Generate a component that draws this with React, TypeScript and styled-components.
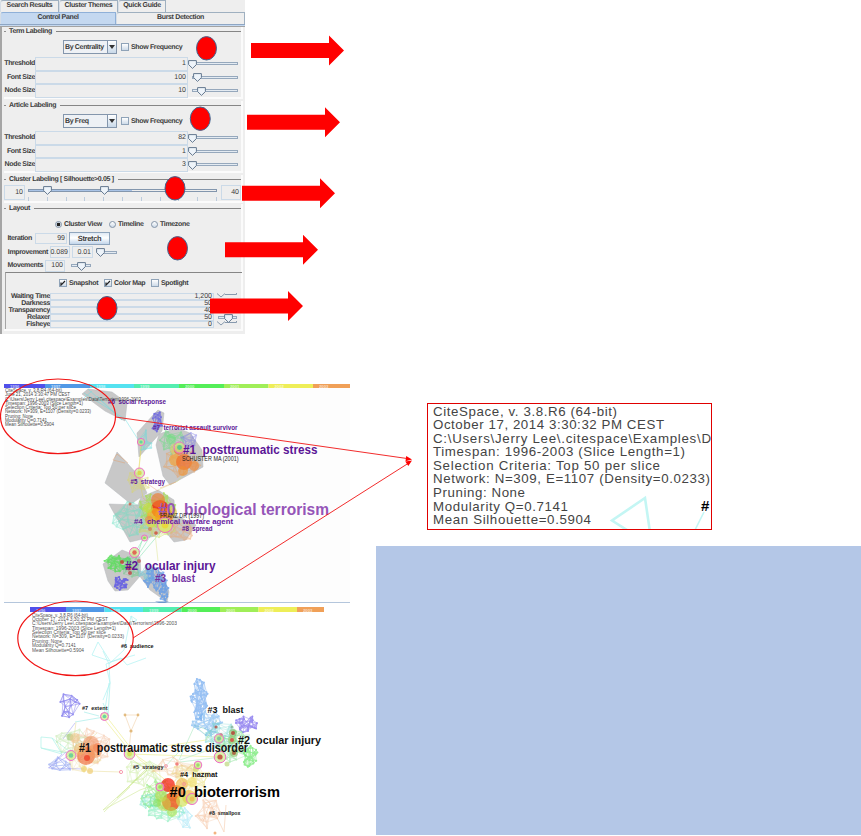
import React, { FC, ReactNode } from 'react'
import { createGlobalStyle, styled } from 'styled-components'

const GlobalStyle = createGlobalStyle`
  body {
    margin: 0;
    background: #fff;
  }

  * {
    box-sizing: border-box;
  }
`;

const Page = styled.div`
  position: relative;
  width: 861px;
  height: 836px;
  overflow: hidden;
  font-family: "Liberation Sans", Arial, sans-serif;
`;

/* ---------- control panel ---------- */

const Panel = styled.div`
  width: 245px;
  height: 334px;
  background: #eee;
  color: #3c3c3c;
  font-size: 7px;
  font-weight: 700;
  letter-spacing: -0.34px;
  line-height: 8px;
  white-space: nowrap;
  text-rendering: geometricPrecision;
`;

const TabRow = styled.div`
  display: flex;
  height: 12px;
`;

const Tab = styled.div<{ $width: number; $active?: boolean }>`
  width: ${({ $width }) => $width}px;
  padding-top: 1px;
  text-align: center;
  border: 1px solid ${({ $active }) => ($active ? '#8fb0d8' : '#9fb0c0')};
  border-bottom: none;
  border-left-color: #d5dde6;
  border-top-left-radius: 3px;
  background: ${({ $active }) => ($active ? '#c4d8f0' : '#eee')};
`;

const TabEdge = styled.div`
  height: 3px;
  border-top: 1px solid #8ea6c4;
  border-bottom: 1px solid #a3a3a3;
  background: #c4d8f0;
`;

const PanelBody = styled.div`
  height: 307px;
  border-left: 2px solid #a5a5a5;
  padding-left: 2px;
`;

const Section = styled.div<{ $height: number; $gap?: number }>`
  height: ${({ $height }) => $height}px;
  margin-bottom: ${({ $gap }) => $gap ?? 2}px;
  width: 239px;
  border-right: 2px solid #fbfbfb;
  border-bottom: 2px solid #fbfbfb;
`;

const SectionTitle = styled.div`
  display: flex;
  align-items: center;
  height: 8px;

  &::before {
    content: '';
    width: 2px;
    height: 1px;
    margin-right: 3px;
    background: #909090;
  }

  &::after {
    content: '';
    flex: 1;
    height: 1px;
    margin-left: 4px;
    background: #858585;
  }

  span {
    padding-top: 2px;
  }
`;

const ComboRow = styled.div`
  display: flex;
  align-items: center;
  height: 14px;
  margin: 5px 0 3px 59px;
`;

const Combo = styled.div`
  display: flex;
  width: 54px;
  height: 14px;
  margin-right: 4px;
  border: 1px solid #8496ac;
  background: #eef1f5;
`;

const ComboText = styled.span`
  width: 43px;
  padding: 3px 0 0 1px;
`;

const ComboArrow = styled.span`
  display: flex;
  flex: 1;
  align-items: center;
  justify-content: center;
  border-left: 1px solid #8496ac;
  background: linear-gradient(#fff, #c8d8e8);

  &::after {
    content: '';
    border: 3px solid transparent;
    border-top: 4px solid #333;
    border-bottom: none;
  }
`;

const CheckBox = styled.span`
  display: flex;
  width: 8px;
  height: 8px;
  border: 1px solid #8fa3b8;
  background: linear-gradient(#fff, #cddae8);
`;

const CheckItem = styled.div<{ $width?: number }>`
  display: flex;
  align-items: center;
  gap: 2px;
  width: ${({ $width }) => ($width ? `${$width}px` : 'auto')};
`;

const CheckText = styled.span`
  padding-top: 2px;
`;

const Row = styled.div<{ $height: number }>`
  display: flex;
  align-items: center;
  height: ${({ $height }) => $height}px;
`;

const RowLabel = styled.span<{ $width: number }>`
  width: ${({ $width }) => $width}px;
  display: flex;
  justify-content: flex-end;
  padding-top: 1px;
`;

const Field = styled.span<{ $width: number; $height?: number; $left?: number }>`
  width: ${({ $width }) => $width}px;
  height: ${({ $height }) => ($height ? `${$height}px` : '100%')};
  margin-left: ${({ $left }) => $left ?? 0}px;
  display: flex;
  align-items: center;
  justify-content: flex-end;
  padding: 1px 1px 0 0;
  border: 1px solid #cbdae8;
  font-weight: 400;
  letter-spacing: 0;
`;

const SliderBox = styled.span<{ $width: number; $left: number }>`
  position: relative;
  display: flex;
  align-items: center;
  width: ${({ $width }) => $width}px;
  height: 8px;
  margin-left: ${({ $left }) => $left}px;
`;

const Track = styled.span`
  width: 100%;
  height: 3px;
  border: 1px solid #96a8bc;
  background: #e4ebf2;
`;

const ThumbIcon = styled.svg`
  position: absolute;
  top: 0;
  width: 9px;
  height: 9px;
`;

const SliderRow = styled.div`
  display: flex;
  margin-top: 2px;
  height: 15px;
`;

const WideSlider = styled.div`
  position: relative;
  width: 190px;
  margin: 4px 4px 0 3px;
`;

const WideTrack = styled.div`
  height: 3px;
  border: 1px solid #8396ad;
  background: linear-gradient(90deg, #a9c3e6 55%, #eee 55%);
`;

const WideThumbs = styled.div`
  position: absolute;
  top: -3px;
  left: 0;
`;

const Ticks = styled.div`
  display: flex;
  justify-content: space-between;
  margin-top: 5px;

  span {
    width: 1px;
    height: 4px;
    background: #bccbdc;
  }
`;

const RadioRow = styled.div`
  display: flex;
  align-items: center;
  height: 9px;
  margin: 8px 0 2px 51px;
`;

const RadioItem = styled.div<{ $width: number }>`
  display: flex;
  align-items: center;
  gap: 2px;
  width: ${({ $width }) => $width}px;
`;

const RadioDot = styled.span<{ $on?: boolean }>`
  width: 7px;
  height: 7px;
  border: 1px solid #8394a8;
  border-radius: 50%;
  background: ${({ $on }) => ($on ? 'radial-gradient(#222 40%, #dde6ef 60%)' : 'linear-gradient(#fff, #cddae8)')};
`;

const StretchButton = styled.span`
  width: 41px;
  height: 13px;
  margin-left: 2px;
  padding-top: 2px;
  border: 1px solid #8fa5bd;
  background: linear-gradient(#dfe9f4, #fff 45%, #c2d5ea);
  text-align: center;
  font-size: 7.5px;
`;

const InnerBox = styled.div`
  width: 237px;
  height: 57px;
  margin-left: 1px;
  border-top: 1px solid #858585;
  border-left: 1px solid #a5a5a5;
`;

const CheckRow = styled.div`
  display: flex;
  height: 20px;
  padding: 0 0 0 53px;
  align-items: center;
`;

const CutSlider = styled.svg`
  width: 20px;
  height: 7px;
  margin-left: 3px;
`;

/* ---------- maps and callout ---------- */

const Lower = styled.div`
  display: flex;
  height: 502px;
`;

const MapColumn = styled.div`
  width: 376px;
  padding-top: 50px;
`;

const TopMap = styled.svg`
  display: block;
  width: 346px;
  height: 219px;
  margin-left: 4px;
  background: #fdfdfd;
`;

const BottomMap = styled.svg`
  display: block;
  width: 376px;
  height: 233px;
`;

const SideColumn = styled.div`
  flex: 1;
  padding-top: 69px;
`;

const Callout = styled.div`
  width: 285px;
  height: 127px;
  margin: 0 0 16px 51px;
  border: 1px solid #e00000;
  overflow: hidden;

  svg {
    display: block;
  }
`;

const BlueBlock = styled.div`
  height: 289px;
  background: #b4c7e7;
`;

const Annotations = styled.svg`
  position: absolute;
  top: 0;
  left: 0;
  pointer-events: none;
`;

const Thumb: FC<{ at: number }> = ({ at }) => (
  <ThumbIcon viewBox="0 0 9 9" style={{ left: at }}>
    <path d="M.6.6h7.8v4L4.5 8.4.6 4.6z" fill="#eef4fa" stroke="#64788f" strokeWidth="1" />
  </ThumbIcon>
)

const Slider: FC<{ width: number; left: number; at: number }> = ({ width, left, at }) => (
  <SliderBox $width={width} $left={left}>
    <Track />
    <Thumb at={at} />
  </SliderBox>
)

const Check: FC<{ checked?: boolean; width?: number; children: ReactNode }> = ({ checked, width, children }) => (
  <CheckItem $width={width}>
    <CheckBox>
      {checked && (
        <svg width="6" height="6" viewBox="0 0 6 6">
          <path d="M1 2.5v2.6L5 1" fill="none" stroke="#222" strokeWidth="1.2" />
        </svg>
      )}
    </CheckBox>
    <CheckText>{children}</CheckText>
  </CheckItem>
)

interface LabelingProps {
  title: string;
  mode: string;
  rows: [string, string, number][];
}

const LabelingSection: FC<LabelingProps> = ({ title, mode, rows }) => (
  <Section $height={72}>
    <SectionTitle><span>{title}</span></SectionTitle>
    <ComboRow>
      <Combo>
        <ComboText>{mode}</ComboText>
        <ComboArrow />
      </Combo>
      <Check>Show Frequency</Check>
    </ComboRow>
    {rows.map(([label, value, at]) => (
      <Row key={label} $height={13.5}>
        <RowLabel $width={31}>{label}</RowLabel>
        <Field $width={153}>{value}</Field>
        <Slider width={46} left={4} at={at} />
      </Row>
    ))}
  </Section>
)

type SliderKind = 'cut' | 'full' | 'none';

const displayRows: [string, string, SliderKind][] = [
  ['Waiting Time', '1,200', 'cut'],
  ['Darkness', '50', 'none'],
  ['Transparency', '40', 'none'],
  ['Relaxer', '50', 'full'],
  ['Fisheye', '0', 'cut'],
];

const ControlPanel: FC = () => (
  <Panel>
    <TabRow>
      <Tab $width={59}>Search Results</Tab>
      <Tab $width={59}>Cluster Themes</Tab>
      <Tab $width={48}>Quick Guide</Tab>
    </TabRow>
    <TabRow>
      <Tab $width={116} $active>Control Panel</Tab>
      <Tab $width={129}>Burst Detection</Tab>
    </TabRow>
    <TabEdge />
    <PanelBody>
      <LabelingSection
        title="Term Labeling"
        mode="By Centrality"
        rows={[['Threshold', '1', -4], ['Font Size', '100', 1], ['Node Size', '10', 5]]}
      />
      <LabelingSection
        title="Article Labeling"
        mode="By Freq"
        rows={[['Threshold', '82', -4], ['Font Size', '1', -4], ['Node Size', '3', -4]]}
      />
      <Section $height={28} $gap={1}>
        <SectionTitle><span>Cluster Labeling [ Silhouette&gt;0.05 ]</span></SectionTitle>
        <SliderRow>
          <Field $width={21}>10</Field>
          <WideSlider>
            <WideTrack />
            <WideThumbs>
              <Thumb at={15} />
              <Thumb at={72} />
            </WideThumbs>
            <Ticks>
              {Array.from({ length: 11 }, (_, i) => <span key={i} />)}
            </Ticks>
          </WideSlider>
          <Field $width={20}>40</Field>
        </SliderRow>
      </Section>
      <Section $height={127} $gap={0}>
        <SectionTitle><span>Layout</span></SectionTitle>
        <RadioRow>
          <RadioItem $width={54}><RadioDot $on />Cluster View</RadioItem>
          <RadioItem $width={42}><RadioDot />Timeline</RadioItem>
          <RadioItem $width={42}><RadioDot />Timezone</RadioItem>
        </RadioRow>
        <Row $height={14}>
          <RowLabel $width={28}>Iteration</RowLabel>
          <Field $width={32} $height={11} $left={3}>99</Field>
          <StretchButton>Stretch</StretchButton>
        </Row>
        <Row $height={14}>
          <RowLabel $width={44}>Improvement</RowLabel>
          <Field $width={20} $height={12} $left={2}>0.089</Field>
          <Field $width={21} $height={12} $left={2}>0.01</Field>
          <Slider width={20} left={4} at={-1} />
        </Row>
        <Row $height={13}>
          <RowLabel $width={39}>Movements</RowLabel>
          <Field $width={20} $height={12} $left={2}>100</Field>
          <Slider width={20} left={6} at={6} />
        </Row>
        <InnerBox>
          <CheckRow>
            <Check checked width={45}>Snapshot</Check>
            <Check checked width={47}>Color Map</Check>
            <Check>Spotlight</Check>
          </CheckRow>
          {displayRows.map(([label, value, kind]) => (
            <Row key={label} $height={7}>
              <RowLabel $width={44}>{label}</RowLabel>
              <Field $width={164}>{value}</Field>
              {kind === 'full' && <Slider width={19} left={4} at={6} />}
              {kind === 'cut' && (
                <CutSlider viewBox="0 0 20 7">
                  <path d="M0 .5l4 3.5l4-3.5M8 1.5h11.5V0" fill="none" stroke="#8799ad" />
                </CutSlider>
              )}
            </Row>
          ))}
        </InnerBox>
      </Section>
    </PanelBody>
  </Panel>
)

/* Text fitted to the width between x and end */
interface FitProps {
  x: number;
  end: number;
  y: number;
  size: number;
  fill?: string;
  bold?: boolean;
  adjust?: 'spacing' | 'spacingAndGlyphs';
  children: string;
}

const Fit: FC<FitProps> = ({ x, end, y, size, fill = '#333', bold, adjust = 'spacingAndGlyphs', children }) => (
  <text
    x={x}
    y={y}
    textLength={end - x}
    lengthAdjust={adjust}
    fontSize={size}
    fontWeight={bold ? 700 : 400}
    fill={fill}
    style={{ whiteSpace: 'pre' }}
  >
    {children}
  </text>
)

const yearColors = ['#5050ea', '#5098e6', '#54e2f0', '#54eeb0', '#54ee58', '#a0ee58', '#eeee58', '#f0a058'];

interface YearBarProps {
  edges: number[];
  y: number;
  height: number;
}

const YearBar: FC<YearBarProps> = ({ edges, y, height }) => (
  <g>
    {yearColors.map((color, i) => (
      <g key={color}>
        <rect x={edges[i]} y={y} width={edges[i + 1] - edges[i]} height={height} fill={color} />
        <text x={edges[i] + 6} y={y + height - 0.3} fontSize="4.2" fontWeight="700" fill="#fff" opacity=".65">
          {1996 + i}
        </text>
      </g>
    ))}
  </g>
)

const makeRandom = (seed: number) => {
  let state = seed * 7919 + 17;
  return () => {
    state = (state * 16807) % 2147483647;
    return state / 2147483647;
  }
}

interface WebProps {
  cx: number;
  cy: number;
  rx: number;
  ry: number;
  count: number;
  color: string;
  links?: number;
  opacity?: number;
}

const Web: FC<WebProps> = ({ cx, cy, rx, ry, count, color, links = 4, opacity = 0.5 }) => {
  const random = makeRandom(Math.round(cx * 3 + cy * 5 + count));
  // sunflower layout with some jitter keeps the nodes spread over the ellipse
  const nodes = Array.from({ length: count }, (_, i) => {
    const angle = i * 2.4 + random() * 0.9;
    const reach = Math.sqrt((i + 0.3 + random() * 0.9) / count);
    return [cx + Math.cos(angle) * reach * rx, cy + Math.sin(angle) * reach * ry];
  });
  const segments: string[] = [];
  nodes.forEach(([x, y], i) => {
    const near = nodes
      .map((n, j) => ({ j, d: Math.hypot(n[0] - x, n[1] - y) }))
      .filter(({ j }) => j !== i)
      .sort((a, b) => a.d - b.d)
      .slice(0, links);
    const far = Math.floor(random() * count);
    [...near.map(({ j }) => j), far].forEach((j) => {
      segments.push(`M${x.toFixed(1)} ${y.toFixed(1)}L${nodes[j][0].toFixed(1)} ${nodes[j][1].toFixed(1)}`);
    });
  });
  return (
    <g opacity={opacity}>
      <path d={segments.join('')} stroke={color} strokeWidth=".55" fill="none" />
      {nodes.map(([x, y], i) => <circle key={i} cx={x} cy={y} r=".95" fill={color} />)}
    </g>
  )
}

/* [cx, cy, r, fill, opacity] */
type Blob = [number, number, number, string, number];

const Blobs: FC<{ items: Blob[] }> = ({ items }) => (
  <g>
    {items.map(([cx, cy, r, fill, opacity], i) => (
      <circle key={i} cx={cx} cy={cy} r={r} fill={fill} opacity={opacity} />
    ))}
  </g>
)

/* Pivot nodes: pink ring, yellow-green body, small core */
const Pivots: FC<{ items: [number, number, number, string][] }> = ({ items }) => (
  <g>
    {items.map(([cx, cy, r, core], i) => (
      <g key={i}>
        <circle cx={cx} cy={cy} r={r} fill="#cfe88a" fillOpacity=".7" stroke="#f06cc8" strokeWidth="1" />
        <circle cx={cx} cy={cy} r={r * 0.45} fill={core} opacity=".8" />
      </g>
    ))}
  </g>
)

const purple = '#5b1596';

const hulls = [
  '82,394 88,389 112,392 127,403 125,421 105,411',
  '137,433 154,414 158,410 164,413 162,431 139,457',
  '159,434 177,428 190,433 202,450 203,467 170,485 163,476 156,445',
  '117,452 139,476 147,493 131,504 105,483',
  '109,504 138,505 141,497 158,490 174,500 175,515 196,525 186,540 174,542 164,530 155,536 130,542',
  '103,564 122,550 140,557 141,575 128,590 115,591 108,581',
  '139,575 150,566 162,573 169,592 167,602 150,590',
];

const TopNetwork: FC = () => (
  <TopMap viewBox="4 384 346 219">
    <YearBar edges={[4, 45, 90, 134, 179, 224, 268.5, 313, 350]} y={384} height={4} />
    <g fill="#c8c8c8" stroke="#b5b8bd" strokeWidth=".5">
      {hulls.map((points) => <polygon key={points} points={points} />)}
    </g>
    <g fill="none" strokeWidth=".6" opacity=".7">
      <path d="M84 393L125 419L139 441M88 389L122 420L97 396M84 398L92 391" stroke="#5ce0e4" />
      <path d="M141 442L139 472L134 484M139 476L143 498M142 443L138 474" stroke="#e4d84c" />
      <path d="M145 536L136 551M151 535L135 560M164 528L137 560M143 538L138 553" stroke="#5fdc9a" />
      <path d="M153 514L158 561M202 452L178 481L158 490" stroke="#d8e07a" />
      <path d="M117 454L113 460L125 463M117 454L128 463" stroke="#e89a60" />
      <path d="M139 478L158 491M176 482L160 488M143 498L160 512" stroke="#f09a70" />
    </g>
    <Web cx={157} cy={422} rx={6} ry={11} count={16} color="#5b55e6" opacity={0.75} />
    <Web cx={145} cy={441} rx={8} ry={12} count={9} color="#5cdcdc" />
    <Web cx={173} cy={442} rx={14} ry={13} count={26} color="#5ee07a" />
    <Web cx={189} cy={440} rx={9} ry={9} count={12} color="#7a7ae6" />
    <Web cx={182} cy={462} rx={19} ry={16} count={28} color="#e8a060" />
    <Web cx={138} cy={482} rx={12} ry={13} count={14} color="#dcd660" />
    <Web cx={132} cy={519} rx={20} ry={18} count={36} color="#62e0c0" />
    <Web cx={157} cy={509} rx={19} ry={18} count={54} color="#a4e04c" opacity={0.7} />
    <Web cx={157} cy={526} rx={20} ry={12} count={28} color="#c8dc50" />
    <Web cx={181} cy={531} rx={14} ry={11} count={18} color="#f0a468" />
    <Web cx={118} cy={563} rx={14} ry={9} count={44} color="#50e050" opacity={0.8} />
    <Web cx={131} cy={567} rx={10} ry={12} count={18} color="#60cc80" />
    <Web cx={121} cy={583} rx={8} ry={7} count={26} color="#5b55e6" opacity={0.85} />
    <Web cx={147} cy={573} rx={9} ry={9} count={18} color="#62c8d8" />
    <Web cx={155} cy={579} rx={12} ry={12} count={40} color="#5b98ea" opacity={0.75} />
    <Web cx={164} cy={592} rx={5} ry={10} count={20} color="#5b98ea" opacity={0.8} />
    <Blobs
      items={[
        [171, 439, 5, '#6be07a', 0.5], [176, 449, 6, '#e8d060', 0.5],
        [175, 460, 6, '#f5a030', 0.65], [184, 462, 8, '#f0702c', 0.75],
        [194, 466, 5, '#f08838', 0.65], [183, 471, 5, '#f09030', 0.6], [179, 450, 5, '#ee5b30', 0.6],
        [160, 509, 9, '#f22a10', 0.85], [164, 516, 9, '#f07820', 0.75], [154, 515, 7, '#f4b020', 0.7],
        [148, 508, 5, '#c4de3c', 0.65], [158, 500, 7, '#ec7a30', 0.65], [151, 523, 5, '#d8e040', 0.6],
        [165, 526, 7, '#f4dc30', 0.85], [149, 520, 4, '#ee8050', 0.6], [172, 512, 5, '#e8cc40', 0.6],
        [122, 562, 2, '#d02c30', 0.75], [129, 568, 2.5, '#c83048', 0.75], [130, 573, 2, '#b83838', 0.75],
        [139, 561, 2, '#b83838', 0.6], [130, 504, 1.5, '#d05030', 0.7], [156, 533, 1.8, '#d04030', 0.75],
        [150, 529, 2, '#d86840', 0.6],
      ]}
    />
    <Pivots
      items={[
        [141, 442, 3.6, '#4cd2a0'], [139.5, 473, 5, '#d8d040'], [179.5, 447.5, 5.5, '#40cc90'],
        [134.5, 552.5, 5, '#e04a40'], [144.5, 538, 3, '#7cd850'], [165, 525, 7.5, '#ecd430'],
      ]}
    />
    <Fit x={108} end={166} y={404} size={7} fill={purple} bold>#6  social response</Fit>
    <Fit x={153} end={237.5} y={429.5} size={7} fill={purple} bold>#7  terrorist assault survivor</Fit>
    <Fit x={183} end={317.5} y={454.3} size={12.3} fill={purple} bold>#1  posttraumatic stress</Fit>
    <Fit x={182} end={238.5} y={461} size={6.3} fill="#222">SCHUSTER MA (2001)</Fit>
    <Fit x={130.5} end={165} y={484.3} size={6.5} fill={purple} bold>#5  strategy</Fit>
    <Fit x={158} end={329} y={515} size={16.5} fill="#9555b8" bold>#0  biological terrorism</Fit>
    <Fit x={160} end={204} y={518} size={6.3} fill="#222">FRANZ DR (1997)</Fit>
    <Fit x={134} end={233} y={524} size={8} fill="#66209e" bold>#4  chemical warfare agent</Fit>
    <Fit x={182} end={212.5} y={531.3} size={6.3} fill={purple} bold>#8  spread</Fit>
    <Fit x={125} end={215.5} y={569.5} size={12.5} fill={purple} bold>#2  ocular injury</Fit>
    <Fit x={155} end={195} y={581.5} size={10.5} fill="#7334a4" bold>#3  blast</Fit>
    <g opacity=".9">
      <Fit x={5} end={62} y={392} size={5.6}>CiteSpace, v. 3.8.R4 (64-bit)</Fit>
      <Fit x={5} end={70} y={396.3} size={5.6}>June 21, 2014 3:30:47 PM CEST</Fit>
      <Fit x={5} end={141} y={400.6} size={5.6}>{'C:\\Users\\Jerry Lee\\.citespace\\Examples\\Data\\Terrorism1996-2003'}</Fit>
      <Fit x={5} end={83} y={404.9} size={5.6}>Timespan: 1996-2003 (Slice Length=1)</Fit>
      <Fit x={5} end={76} y={409.2} size={5.6}>Selection Criteria: Top 50 per slice</Fit>
      <Fit x={5} end={91} y={413.4} size={5.6}>Network: N=309, E=1107 (Density=0.0233)</Fit>
      <Fit x={5} end={33} y={417.6} size={5.6}>Pruning: None</Fit>
      <Fit x={5} end={47} y={421.9} size={5.6}>Modularity Q=0.7141</Fit>
      <Fit x={5} end={54} y={426.1} size={5.6}>Mean Silhouette=0.5904</Fit>
    </g>
    <path d="M4 602.5H350" stroke="#b4c6dc" />
    <path d="M155 601.5H169L165 603H159z" fill="#6c96cc" />
  </TopMap>
)

const BottomNetwork: FC = () => (
  <BottomMap viewBox="0 603 376 233">
    <YearBar edges={[30, 66, 104.5, 143, 181.5, 220, 258.5, 297, 324]} y={607} height={5} />
    <g fill="none" strokeWidth=".7" opacity=".65">
      <path
        d="M98 642L92 655L110 661L98 642M131 616L133 622L137 620L131 616L124 650L109 664L110 683L103 700M110 683L106 664L121 658L127 665L146 658M110 662L135 655M109 664L103 651M109 683L104 716"
        stroke="#84ecec"
      />
      <path d="M75 722L104 717M108 716L110 683M109 716L103 703M84 712L99 716" stroke="#7ae4e0" />
      <path d="M105 720L129 750L147 763M130 754L220 757M131 751L206 740L217 720M106 716L140 760L168 782" stroke="#e8e860" />
      <path d="M125 715L138 715L131 731L125 715M131 731L129 750" stroke="#eec490" />
      <path d="M127 756L147 770L103 810L140 790L168 780M147 770L117 798L150 765M104 812L130 787" stroke="#c4e478" />
      <path d="M88 771L121 772M76 722L72 755M72 755L97 733" stroke="#e6d888" />
      <path d="M41 737V748L62 754L52 738L41 737M52 738L73 754L41 748" stroke="#84ecdc" />
      <path d="M194 725L232 738M194 725L214 742M206 737L250 735M179 760L194 727M180 760L237 740M180 762L222 757M164 768L187 743" stroke="#94e4b0" />
      <path d="M75 723L63 739M84 769L49 768L62 754M48 768L70 755M66 752L55 762" stroke="#8e8cf0" />
      <path d="M201 795L210 803L203 822M210 803L224 832L226 805" stroke="#f4bc94" />
    </g>
    <Web cx={69} cy={705} rx={11} ry={14} count={15} color="#6a62ea" opacity={0.7} />
    <Web cx={61} cy={765} rx={12} ry={9} count={10} color="#7890ee" opacity={0.55} />
    <Web cx={73} cy={741} rx={19} ry={14} count={20} color="#a6dc84" opacity={0.4} />
    <Web cx={91} cy={747} rx={20} ry={20} count={32} color="#f2b48c" />
    <Web cx={84} cy={759} rx={17} ry={14} count={20} color="#e6cc70" opacity={0.4} />
    <Web cx={199} cy={700} rx={9} ry={22} count={48} color="#6aa6ee" opacity={0.7} />
    <Web cx={207} cy={723} rx={16} ry={13} count={38} color="#6aaeee" opacity={0.6} />
    <Web cx={247} cy={724} rx={12} ry={9} count={26} color="#7a68ec" opacity={0.75} />
    <Web cx={222} cy={736} rx={18} ry={15} count={28} color="#66d2cc" />
    <Web cx={234} cy={746} rx={17} ry={17} count={26} color="#70dc80" />
    <Web cx={250} cy={756} rx={8} ry={12} count={28} color="#66e866" opacity={0.7} />
    <Web cx={143} cy={773} rx={20} ry={15} count={22} color="#b4e474" opacity={0.4} />
    <Web cx={159} cy={796} rx={18} ry={17} count={44} color="#84e86c" opacity={0.6} />
    <Web cx={166} cy={811} rx={19} ry={11} count={28} color="#5ce8a4" />
    <Web cx={149} cy={801} rx={10} ry={9} count={16} color="#6ae4c4" />
    <Web cx={186} cy={818} rx={8} ry={12} count={10} color="#8ce0f4" />
    <Web cx={188} cy={781} rx={24} ry={18} count={42} color="#e8dc6c" />
    <Web cx={174} cy={768} rx={24} ry={11} count={16} color="#f0bc88" />
    <Web cx={208} cy={814} rx={13} ry={17} count={16} color="#f4b488" />
    <Blobs
      items={[
        [70, 737, 3.5, '#a8cc80', 0.7], [75, 738, 5, '#f0c890', 0.6], [91, 744, 8, '#f08c5c', 0.55],
        [86, 756, 9, '#f07444', 0.7], [95, 751, 7, '#f49c64', 0.65], [87, 758, 3, '#ee3c24', 0.75],
        [80, 749, 6, '#f0b464', 0.5], [84, 769, 3, '#f0d470', 0.7], [90, 771, 3, '#f0cc70', 0.7],
        [98, 748, 5, '#f47c50', 0.5], [168, 785, 7, '#f42414', 0.75], [171, 802, 9, '#f05c20', 0.85],
        [161, 796, 6, '#a8dc58', 0.7], [176, 792, 7, '#f07c28', 0.75], [189, 797, 7, '#f4c050', 0.75],
        [164, 804, 7, '#c8dc50', 0.55], [182, 801, 6, '#d0e050', 0.65], [172, 812, 5, '#b0e450', 0.6],
        [182, 784, 6, '#f0b040', 0.6], [192, 782, 5, '#f0dc60', 0.55], [157, 803, 4, '#80e060', 0.6],
        [196, 769, 3, '#d0d870', 0.7], [227, 764, 2.5, '#b0d068', 0.6],
        [233, 733, 4, '#80bc60', 0.6], [232, 740, 4, '#98c860', 0.6], [234, 753, 4, '#88c060', 0.6],
        [233, 733, 2, '#b83830', 0.8], [232, 740, 2, '#e04040', 0.8], [234, 753, 2, '#a85030', 0.8],
        [216, 727, 1.6, '#b04840', 0.8], [221, 735, 1.7, '#b04840', 0.8], [232, 727, 1.5, '#609878', 0.6],
        [177, 764, 1.8, '#f06868', 0.8], [125, 715, 1.4, '#dcac64', 0.8], [138, 715, 1.4, '#dcac64', 0.8],
        [131, 731, 1.6, '#dcac64', 0.8], [215, 833, 1.5, '#f0a060', 0.8],
      ]}
    />
    <Pivots
      items={[
        [104.5, 716.5, 4, '#48d0a0'], [71, 755.5, 5, '#58cc98'], [129.5, 754, 5.3, '#d4dc48'],
        [220, 757, 5.8, '#c03c34'], [219, 738.5, 4.5, '#70bc98'], [198, 765, 3.8, '#8cd85c'],
        [160, 787, 4, '#8cdc50'], [192, 799, 5.5, '#f0b850'],
      ]}
    />
    <g fill="none" stroke="#f484a0" strokeWidth=".8">
      <circle cx={121} cy={772} r={1.6} />
      <circle cx={166} cy={766} r={1.4} />
      <circle cx={184} cy={784} r={1.4} />
    </g>
    <Fit x={121} end={153.5} y={648} size={6.2} fill="#111" bold>#6  audience</Fit>
    <Fit x={82} end={107.5} y={710.3} size={5.8} fill="#222" bold>#7  extent</Fit>
    <Fit x={207.5} end={243.5} y={712.5} size={9.3} fill="#111" bold>#3  blast</Fit>
    <Fit x={238} end={321} y={744} size={11.7} fill="#111" bold>#2  ocular injury</Fit>
    <Fit x={79} end={248} y={751.7} size={12} fill="#111" bold>#1  posttraumatic stress disorder</Fit>
    <Fit x={133} end={163.5} y={769.3} size={6} fill="#222" bold>#5  strategy</Fit>
    <Fit x={180} end={217.5} y={776.7} size={7.5} fill="#111" bold>#4  hazmat</Fit>
    <Fit x={169.5} end={280} y={797} size={15.3} fill="#000" bold>#0  bioterrorism</Fit>
    <Fit x={209} end={240.5} y={815} size={6} fill="#222" bold>#8  smallpox</Fit>
    <g opacity=".85">
      <Fit x={32} end={88} y={616.5} size={5.5}>CiteSpace, v. 3.8.R6 (64-bit)</Fit>
      <Fit x={32} end={108} y={620.8} size={5.5}>October 17, 2014 3:30:32 PM CEST</Fit>
      <Fit x={32} end={177} y={625.4} size={5.5}>{'C:\\Users\\Jerry Lee\\.citespace\\Examples\\Data\\Terrorism\\1996-2003'}</Fit>
      <Fit x={32} end={116} y={629.6} size={5.5}>Timespan: 1996-2003 (Slice Length=1)</Fit>
      <Fit x={32} end={106} y={633.8} size={5.5}>Selection Criteria: Top 50 per slice</Fit>
      <Fit x={32} end={124} y={638.2} size={5.5}>Network: N=309, E=1107 (Density=0.0233)</Fit>
      <Fit x={32} end={62} y={642.7} size={5.5}>Pruning: None</Fit>
      <Fit x={32} end={76} y={647.2} size={5.5}>Modularity Q=0.7141</Fit>
      <Fit x={32} end={84} y={651.8} size={5.5}>Mean Silhouette=0.5904</Fit>
    </g>
  </BottomMap>
)

/* [text, right edge] */
const summary: [string, number][] = [
  ['CiteSpace, v. 3.8.R6 (64-bit)', 617],
  ['October 17, 2014 3:30:32 PM CEST', 664],
  ['C:\\Users\\Jerry Lee\\.citespace\\Examples\\D', 711],
  ['Timespan: 1996-2003 (Slice Length=1)', 685],
  ['Selection Criteria: Top 50 per slice', 660],
  ['Network: N=309, E=1107 (Density=0.0233)', 710],
  ['Pruning: None', 525],
  ['Modularity Q=0.7141', 568],
  ['Mean Silhouette=0.5904', 591],
];

/* [left, center y] of each block arrow */
const arrows = [[251, 50.5], [247, 122.3], [242, 193.3], [225, 249.8], [210, 306]];

const dots = [[206.5, 48.3], [200.3, 118.7], [175, 188.3], [177.5, 248.3], [107, 308.2]];

const App: FC = () => (
  <Page>
    <GlobalStyle />
    <ControlPanel />
    <Lower>
      <MapColumn>
        <TopNetwork />
        <BottomNetwork />
      </MapColumn>
      <SideColumn>
        <Callout>
          <svg width="283" height="125" viewBox="428 404 283 125">
            <g fill="none" stroke="#c4f6f4" strokeWidth="2.6">
              <path d="M630 532L612 520.5L645 498L650 532" />
              <path d="M704 512L694 532" strokeWidth="1.6" />
            </g>
            {summary.map(([text, end], i) => (
              <Fit key={text} x={433} end={end} y={415.7 + i * 13.55} size={13.3} fill="#444" adjust="spacing">
                {text}
              </Fit>
            ))}
            <text x="701" y="511" fontSize="15" fontWeight="700">#</text>
          </svg>
        </Callout>
        <BlueBlock />
      </SideColumn>
    </Lower>
    <Annotations width="861" height="836" viewBox="0 0 861 836">
      {dots.map(([cx, cy]) => (
        <ellipse key={cy} cx={cx} cy={cy} rx="10" ry="11.7" fill="#f00" stroke="#3f6591" />
      ))}
      {arrows.map(([x, y]) => (
        <path key={y} d={`M${x} ${y - 7.5}h78v-7.5l15 15l-15 15v-7.5h-78z`} fill="#f00" />
      ))}
      <g fill="none" stroke="#f01414">
        <ellipse cx="58" cy="416.3" rx="57.5" ry="37.3" strokeWidth="1.2" />
        <ellipse cx="75.5" cy="638.3" rx="57.7" ry="37.3" strokeWidth="1.2" />
        <path d="M115.5 417L407 458.5M133 638L408 463.5" strokeWidth=".9" />
      </g>
      <path d="M412 459.5L405.5 461.3L406.2 456z M412 460.5L408.3 466L405.3 461.5z" fill="#f00" />
    </Annotations>
  </Page>
)

export default App
